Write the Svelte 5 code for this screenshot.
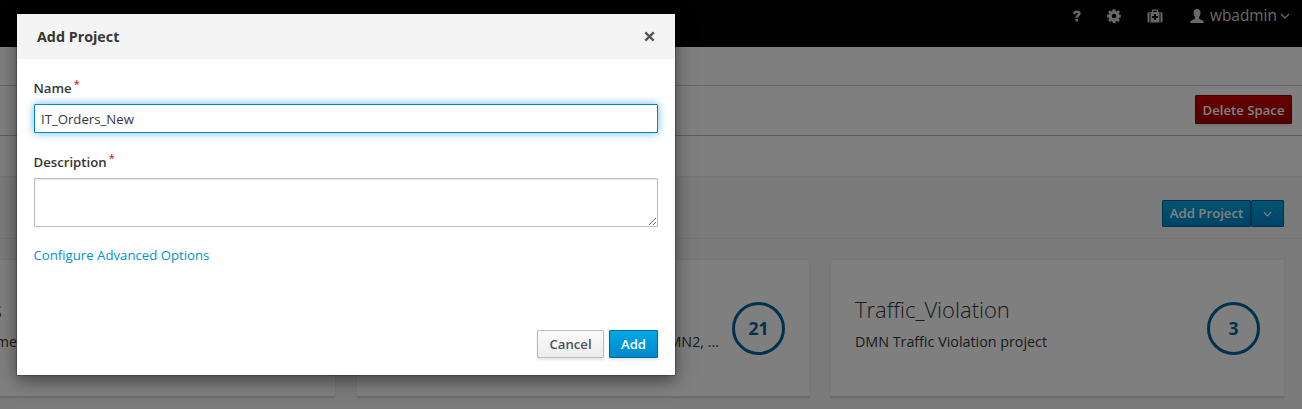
<script>
  let name = $state('IT_Orders_New');
  let description = $state('');
  const cards = [
    { title: 'Process', text: 'Employee me', clip: true, count: '' },
    { title: 'Evaluation', text: 'DMN2, ...', count: '21', end: true },
    { title: 'Traffic_Violation', text: 'DMN Traffic Violation project', count: '3' }
  ];
</script>

<div class="app">
  <header>
    <svg class="q" viewBox="0 0 10 12"><path d="M1 3.500Q1.700 .5 4.700 .5Q8.700 .5 8.700 3.600Q8.700 5.200 6.900 6.200Q6 6.800 6 7.800H3.500Q3.400 5.800 4.800 4.900Q5.900 4.300 5.900 3.600Q5.900 2.700 4.800 2.700Q3.700 2.700 2.900 4.700ZM3.500 8.900H6V11.400H3.500Z" /></svg>
    <svg class="gear" viewBox="0 0 14 14"><path fill-rule="evenodd" d="M5.600 .3h2.800l.3 1.700 .9 .4 1.500-1.100 1.800 1.800-1.100 1.500.4.900 1.600.3v2.700l-1.600.3-.4.900 1.100 1.500-1.800 1.800-1.500-1.100-.9 .4-.3 1.600H5.600l-.3-1.600-.9-.4-1.500 1.100L1.100 11.200l1.100-1.500-.4-.9L.1 8.500V5.800l1.700-.3.4-.9L1.100 3.100 2.900 1.300l1.500 1.100.9-.4ZM7 4.700a2.300 2.300 0 1 0 0 4.600a2.300 2.300 0 0 0 0-4.600Z" /></svg>
    <svg class="kit" viewBox="0 0 16 14"><path fill-rule="evenodd" d="M5 3V1.300Q5 .5 5.800 .5h4.400Q11 .5 11 1.300V3h1.500v10.500h-9V3ZM6.200 3h3.600V1.700H6.200ZM7 5v2H5v2h2v2h2V9h2V7H9V5ZM2.500 3v10.500H2Q.5 13.500 .5 12V4.500Q.5 3 2 3ZM13.500 3H14Q15.500 3 15.500 4.500V12Q15.500 13.500 14 13.500h-.5Z" /></svg>
    <svg class="user" viewBox="0 0 14 14"><path d="M7 0Q10.500 0 10.500 4Q10.500 6.600 9 8V9.600Q9.300 10.400 11.500 11Q14 11.700 14 14H0Q0 11.700 2.500 11Q4.700 10.400 5 9.600V8Q3.500 6.600 3.500 4Q3.500 0 7 0Z" /></svg>
    <span class="username">wbadmin</span>
    <svg class="chev" viewBox="0 0 10 6"><path d="M1 1L5 5L9 1" /></svg>
  </header>
  <div class="crumbs"></div>
  <div class="actions"><button class="btn danger">Delete Space</button></div>
  <div class="tabs"></div>
  <main>
    <div class="toolbar">
      <button class="btn primary split">Add Project</button><button class="btn primary toggle" aria-label="More"><svg viewBox="0 0 10 6"><path d="M1 1L5 5L9 1" /></svg></button>
    </div>
    <div class="cards">
      {#each cards as c}
        <article>
          <div class="info" class:end={c.end} class:clip={c.clip}>
            <h2>{c.title}</h2>
            <p>{c.text}</p>
          </div>
          {#if c.count}<div class="count">{c.count}</div>{/if}
        </article>
      {/each}
    </div>
  </main>
  <div class="backdrop"></div>
  <div class="modal" role="dialog" aria-label="Add Project">
    <div class="head">
      <h4>Add Project</h4>
      <svg viewBox="0 0 10 10"><path d="M1.200 1.200L8.800 8.800M8.800 1.200L1.200 8.800" /></svg>
    </div>
    <div class="body">
      <label for="name">Name<sup>*</sup></label>
      <input id="name" bind:value={name} />
      <label for="desc">Description<sup>*</sup></label>
      <textarea id="desc" bind:value={description}></textarea>
      <a href="#advanced">Configure Advanced Options</a>
    </div>
    <div class="foot">
      <button class="btn cancel">Cancel</button>
      <button class="btn primary add">Add</button>
    </div>
  </div>
</div>

<style>
  :global(body) { overflow: hidden; }
  * { box-sizing: border-box; }
  .app { position: relative; width: 1302px; height: 409px; overflow: hidden; background: #f5f5f5; color: #363636; font-family: "Open Sans", sans-serif; font-size: 13.2px; }
  header { height: 47px; background: #030303; display: flex; align-items: flex-start; color: #d1d1d1; }
  header svg { fill: #d1d1d1; flex: none; }
  .q { width: 10px; height: 12px; margin: 10px 0 0 1072px; }
  .gear { width: 14px; height: 14px; margin: 9px 0 0 25px; }
  .kit { width: 16px; height: 14px; margin: 9px 0 0 26px; }
  .user { width: 14px; height: 14px; margin: 9px 0 0 27px; }
  .username { width: 68px; margin-left: 6px; font-size: 15.4px; line-height: 22px; margin-top: 5px; }
  header .chev { width: 10px; height: 6px; margin: 13px 0 0 2px; }
  .chev path, .toggle path { fill: none; stroke: currentColor; stroke-width: 1.3; }
  .crumbs { height: 39px; background: #fff; border-bottom: 1px solid #d1d1d1; }
  .actions { height: 50px; background: #fff; border-bottom: 1px solid #bbb; padding: 9px 10px 0 0; display: flex; justify-content: flex-end; align-items: flex-start; }
  .tabs { height: 41px; background: #fff; border-bottom: 1px solid #ededed; }
  .btn { font: 600 13.2px/20px "Open Sans", sans-serif; padding: 0; border: 1px solid; border-radius: 1px; text-align: center; white-space: nowrap; box-shadow: 0 2px 3px rgba(3,3,3,.1); }
  .danger { width: 97px; height: 29px; color: #fff; border-color: #8b0000; background: linear-gradient(#c00, #a30000); }
  .primary { color: #fff; border-color: #00659c; background: linear-gradient(#00a8e1, #0088ce); }
  .toolbar { height: 62px; border-bottom: 1px solid #e8e8e8; padding: 23px 18px 0 0; display: flex; justify-content: flex-end; align-items: flex-start; }
  .split { width: 89px; height: 27px; box-shadow: none; padding-bottom: 2px; }
  .toggle { width: 33px; height: 27px; box-shadow: none; }
  .toggle svg { width: 9px; height: 6px; display: block; margin: 0 auto; }
  .cards { display: grid; grid-template-columns: 452px 452px 453px; gap: 22px; margin: 21px 0 0 -117px; width: 1401px; }
  article { height: 138px; background: #fff; border-bottom: 2px solid #d8d8d8; box-shadow: 0 0 1px rgba(3,3,3,.2); padding: 0 24px; display: flex; justify-content: space-between; }
  .info { width: 339px; padding-top: 34px; }
  .info.end { padding-right: 1px; }
  .info.end p { text-align: right; }
  .info.clip { width: 110px; text-align: right; }
  .clip h2 { margin-right: 15px; }
  h2 { font-size: 22px; font-weight: 300; line-height: 30px; margin: 0; white-space: nowrap; }
  .info p { font-size: 14.3px; line-height: 22px; margin: 7px 0 0; white-space: nowrap; }
  .count { width: 53px; height: 53px; margin-top: 42px; border: 3px solid #00659c; border-radius: 50%; color: #00659c; font-size: 17.6px; font-weight: 700; line-height: 47px; text-align: center; flex: none; }
  .backdrop { position: absolute; inset: 0; background: rgba(0,0,0,.5); }
  .modal { position: absolute; left: 17px; top: 14px; width: 658px; height: 361px; background: #fff; box-shadow: 0 0 0 1px rgba(0,0,0,.2), 0 5px 16px rgba(0,0,0,.5); display: flex; flex-direction: column; }
  .head { height: 45px; background: #f4f4f4; display: flex; justify-content: space-between; align-items: center; padding: 0 20px; }
  h4 { font-size: 14.3px; font-weight: 700; margin: 0; }
  .head svg { width: 11px; height: 11px; fill: none; stroke: #555; stroke-width: 2.1; }
  .body { padding: 19px 17px 0; display: flex; flex-direction: column; flex: 1; }
  label { font-weight: 600; line-height: 20px; height: 26px; margin-left: -.5px; }
  sup { color: #c00; font-size: 11px; font-weight: 400; line-height: 0; position: relative; top: 0; margin-left: 2px; vertical-align: super; }
  input, textarea { font: 13.2px "Open Sans", sans-serif; color: #363636; border: 1px solid #bbb; border-radius: 1px; background: #fff; width: 624px; outline: none; margin: 0; box-shadow: inset 0 1px 1px rgba(3,3,3,.08); }
  input { height: 29px; padding: 0 6px; border-color: #0088ce; box-shadow: 0 0 8px rgba(0,136,206,.6); margin-bottom: 19px; }
  textarea { height: 49px; resize: vertical; margin-bottom: 18px; }
  a { color: #0092cf; text-decoration: none; line-height: 20px; margin-left: -.5px; }
  .foot { display: flex; justify-content: flex-end; gap: 5px; padding: 0 17px 17px; }
  .cancel { width: 67px; height: 28px; color: #4d5258; border-color: #bbb; background: linear-gradient(#fafafa, #ededed); }
  .add { width: 49px; height: 28px; }
</style>
